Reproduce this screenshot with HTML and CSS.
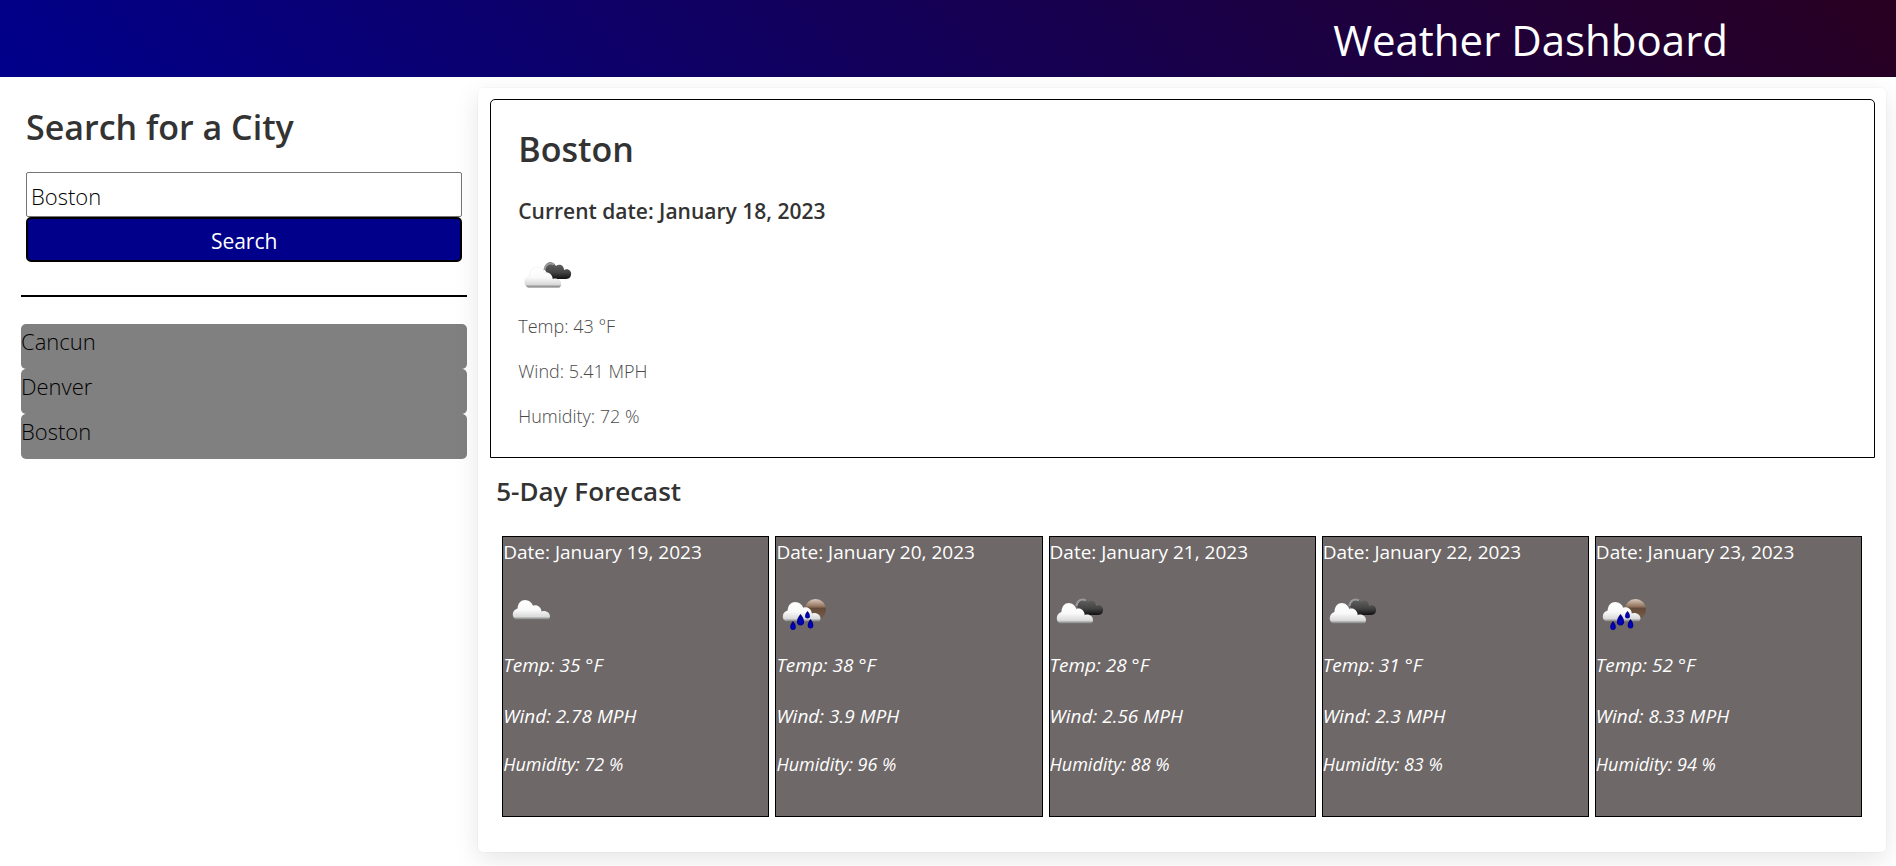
FILE: index.html
```html
<!DOCTYPE html>
<html lang="en">
<head>
<meta charset="utf-8">
<title>Weather Dashboard</title>
<link rel="stylesheet" href="styles.css">
</head>
<body>
<svg class="defs" width="0" height="0" aria-hidden="true">
  <defs>
    <linearGradient id="white" x1="0" y1="0" x2="0" y2="1">
      <stop offset="0" stop-color="#fff"/><stop offset=".5" stop-color="#fafafa"/><stop offset=".85" stop-color="#dadada"/><stop offset="1" stop-color="#777"/>
    </linearGradient>
    <linearGradient id="dark" x1="0" y1="0" x2="0" y2="1">
      <stop offset="0" stop-color="#666"/><stop offset=".6" stop-color="#444"/><stop offset="1" stop-color="#111"/>
    </linearGradient>
    <linearGradient id="moon" x1="0" y1="0" x2="0" y2="1">
      <stop offset="0" stop-color="#dccabd"/><stop offset=".35" stop-color="#94765f"/><stop offset=".45" stop-color="#644a38"/><stop offset="1" stop-color="#7a5f4b"/>
    </linearGradient>
    <radialGradient id="drop" cx=".5" cy=".65" r=".6">
      <stop offset="0" stop-color="#0000d8"/><stop offset="1" stop-color="#000070"/>
    </radialGradient>
    <symbol id="cloud" viewBox="0 0 39 22" preserveAspectRatio="none">
      <path fill="url(#white)" stroke="#888" stroke-opacity=".15" stroke-width=".6" d="M4 21.500C-1 19 0 11.500 5.500 10C6 4 9 1 13 1C17 1 20 4 21 7C25 5.500 29 8 29.500 13C34 11.500 38 14.500 38 18C38 20 37 21.500 36 21.500Z"/>
    </symbol>
    <symbol id="broken" viewBox="0 0 56 56">
      <path fill="url(#dark)" d="M27 22C26 13 35 12 38 18C41 15.500 46 17 46 22C50 20 54 23 53 27C52.500 30 50 31 48 31H33Z"/>
      <path fill="none" stroke="#999" stroke-width="2" d="M26.500 22C27 16 32 14 36 16.500"/>
      <use href="#cloud" x="6" y="18" width="38" height="22"/>
    </symbol>
    <symbol id="overcast" viewBox="0 0 56 56">
      <use href="#cloud" x="9" y="15" width="39" height="21"/>
    </symbol>
    <symbol id="rain" viewBox="0 0 56 56">
      <circle cx="39.500" cy="25.500" r="10.500" fill="url(#moon)"/>
      <use href="#cloud" x="6" y="17" width="39.500" height="21"/>
      <path fill="url(#drop)" d="M17 37C21 41.500 20.500 46 17 46S13 41.500 17 37Z"/>
      <path fill="url(#drop)" d="M24.500 30C29.500 36 29 41.500 24.500 41.500S19.500 36 24.500 30Z"/>
      <path fill="url(#drop)" d="M31.500 27C35 31 34.500 34.500 31.500 34.500S28 31 31.500 27Z"/>
      <path fill="url(#drop)" d="M34.500 35C38.500 39.500 38 44.500 34.500 44.500S30.500 39.500 34.500 35Z"/>
    </symbol>
  </defs>
</svg>
<header class="header"><h1 class="header-title">Weather Dashboard</h1></header>
<main class="layout">
  <aside class="sidebar">
    <form class="search">
      <label class="search-label" for="city">Search for a City</label>
      <input class="search-input" id="city" type="text" value="Boston">
      <button class="search-button" type="button">Search</button>
    </form>
    <ul class="history">
      <li><button class="history-item" type="button">Cancun</button></li>
      <li><button class="history-item" type="button">Denver</button></li>
      <li><button class="history-item" type="button">Boston</button></li>
    </ul>
  </aside>
  <section class="weather">
    <article class="current">
      <h2 class="current-city">Boston</h2>
      <h3 class="current-date">Current date: January 18, 2023</h3>
      <svg class="icon" role="img" aria-label="Broken clouds"><use href="#broken"/></svg>
      <p class="current-fact">Temp: 43 °F</p>
      <p class="current-fact">Wind: 5.41 MPH</p>
      <p class="current-fact">Humidity: 72 %</p>
    </article>
    <h2 class="forecast-title">5-Day Forecast</h2>
    <div class="forecast">
      <article class="day">
        <h3 class="day-date">Date: January 19, 2023</h3>
        <svg class="icon" role="img" aria-label="Overcast"><use href="#overcast"/></svg>
        <p class="day-fact">Temp: 35 °F</p>
        <p class="day-fact">Wind: 2.78 MPH</p>
        <p class="day-fact day-humidity">Humidity: 72 %</p>
      </article>
      <article class="day">
        <h3 class="day-date">Date: January 20, 2023</h3>
        <svg class="icon" role="img" aria-label="Rain"><use href="#rain"/></svg>
        <p class="day-fact">Temp: 38 °F</p>
        <p class="day-fact">Wind: 3.9 MPH</p>
        <p class="day-fact day-humidity">Humidity: 96 %</p>
      </article>
      <article class="day">
        <h3 class="day-date">Date: January 21, 2023</h3>
        <svg class="icon" role="img" aria-label="Broken clouds"><use href="#broken"/></svg>
        <p class="day-fact">Temp: 28 °F</p>
        <p class="day-fact">Wind: 2.56 MPH</p>
        <p class="day-fact day-humidity">Humidity: 88 %</p>
      </article>
      <article class="day">
        <h3 class="day-date">Date: January 22, 2023</h3>
        <svg class="icon" role="img" aria-label="Broken clouds"><use href="#broken"/></svg>
        <p class="day-fact">Temp: 31 °F</p>
        <p class="day-fact">Wind: 2.3 MPH</p>
        <p class="day-fact day-humidity">Humidity: 83 %</p>
      </article>
      <article class="day">
        <h3 class="day-date">Date: January 23, 2023</h3>
        <svg class="icon" role="img" aria-label="Rain"><use href="#rain"/></svg>
        <p class="day-fact">Temp: 52 °F</p>
        <p class="day-fact">Wind: 8.33 MPH</p>
        <p class="day-fact day-humidity">Humidity: 94 %</p>
      </article>
    </div>
  </section>
</main>
</body>
</html>
```
FILE: styles.css
```css
*, *::before, *::after { box-sizing: border-box; }
body {
  margin: 0;
  background: #fff;
  color: #333;
  font-family: "Segoe UI", "Open Sans", sans-serif;
  font-size: 22px;
}
h1, h2, h3, p, ul { margin: 0; padding: 0; }
.defs { position: absolute; }
.header {
  display: flex;
  justify-content: flex-end;
  padding: 10px 168px 7px 0;
  background: linear-gradient(45deg, darkblue, #280020);
}
.header-title { color: #fff; font-size: 42px; font-weight: 400; line-height: 60px; }
.layout { display: flex; align-items: flex-start; padding: 11px 10px 14px 21px; gap: 11px; }
.sidebar { flex: 0 0 calc(25% - 20px); }
.search {
  display: flex;
  flex-direction: column;
  padding: 15px 5px 33px;
  border-bottom: 2px solid #000;
}
.search-label { margin-bottom: 21px; font-size: 34px; font-weight: 600; line-height: 48px; }
.search-input {
  height: 45px;
  padding: 2px 4px 0;
  border: 1px solid #767676;
  border-radius: 2px;
  background: #fff;
  color: #000;
  font: 300 22px "Segoe UI", "Open Sans", sans-serif;
}
.search-button {
  height: 45px;
  padding: 2px 0 0;
  border: 2px solid #000;
  border-radius: 5px;
  background: darkblue;
  color: #fff;
  font: 400 21px "Segoe UI", "Open Sans", sans-serif;
}
.history { margin-top: 27px; list-style: none; }
.history-item {
  display: block;
  width: 100%;
  height: 45px;
  padding: 0 0 12px;
  border: 0;
  border-radius: 5px;
  background: gray;
  color: #000;
  font: 300 22px "Segoe UI", "Open Sans", sans-serif;
  text-align: left;
}
.weather {
  flex: 1;
  min-width: 0;
  padding: 11px 11px 35px 12px;
  border-radius: 5px;
  background: #fff;
  box-shadow: 0 8px 26px rgba(10, 10, 10, .1), 0 0 0 1px rgba(10, 10, 10, .02);
}
.current {
  padding: 24px 27px 18px;
  border: 1px solid #000;
  border-radius: 5px 5px 0 0;
}
.current-city { font-size: 34px; font-weight: 600; line-height: 50px; }
.current-date { margin: 21px 0; font-size: 21px; font-weight: 600; line-height: 32px; }
.icon { display: block; width: 56px; height: 56px; }
.current-fact { color: #4a4a4a; font-size: 18px; font-weight: 300; line-height: 45px; }
.forecast-title { margin: 13px 6px 25px; font-size: 26px; font-weight: 600; line-height: 40px; }
.forecast { display: grid; grid-template-columns: repeat(5, 1fr); gap: 6px; padding: 0 13px 0 12px; }
.day {
  padding-bottom: 29px;
  border: 1px solid #000;
  background: #6e6868;
  color: #fff;
}
.day-date { margin-bottom: 17px; font-size: 19px; font-weight: 400; line-height: 30px; }
.day-fact { font-size: 19px; font-style: italic; font-weight: 400; line-height: 51px; }
.day-humidity { font-size: 18px; line-height: 45px; }
```
